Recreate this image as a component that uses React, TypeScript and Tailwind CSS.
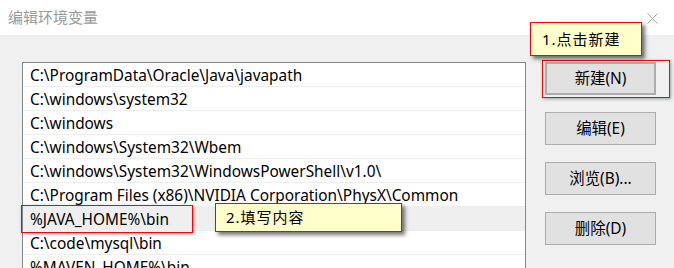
import React from 'react';

const paths = [
  'C:\\ProgramData\\Oracle\\Java\\javapath',
  'C:\\windows\\system32',
  'C:\\windows',
  'C:\\windows\\System32\\Wbem',
  'C:\\windows\\System32\\WindowsPowerShell\\v1.0\\',
  'C:\\Program Files (x86)\\NVIDIA Corporation\\PhysX\\Common',
  '%JAVA_HOME%\\bin',
  'C:\\code\\mysql\\bin',
  '%MAVEN_HOME%\\bin',
];

const buttons = ['新建(N)', '编辑(E)', '浏览(B)...', '删除(D)'];

const font = { fontFamily: '"Noto Sans", "Noto Sans CJK SC", sans-serif' };

const App: React.FC = () => {
  return (
    <div className="relative w-[674px] h-[268px] overflow-hidden bg-[#f0f0f0] text-black" style={font}>
      {/* title bar */}
      <div className="h-[35px] bg-white flex items-center justify-between pl-[8px] pr-[16px]">
        <span className="text-[15px] text-[#9a9a9a]">编辑环境变量</span>
        <svg width="11" height="11" viewBox="0 0 11 11" className="mt-[1px]">
          <path d="M0.5 0.5 L10.5 10.5 M10.5 0.5 L0.5 10.5" stroke="#a0a0a0" strokeWidth="1" />
        </svg>
      </div>

      <div className="flex pl-[22px] pt-[27px] gap-[19px]">
        {/* path list */}
        <div className="w-[504px] h-[240px] bg-white border border-[#828790] border-b-0 overflow-hidden">
          {paths.map((p, i) => (
            <div
              key={p}
              className={`h-[24px] pl-[7px] flex items-center pt-[2px] text-[15.4px] leading-none whitespace-nowrap border-b border-[#eeeeee] ${
                i === 6 ? 'bg-[#efefef]' : ''
              }`}
            >
              {p}
            </div>
          ))}
        </div>

        {/* buttons */}
        <div className="flex flex-col gap-[17px]">
          {buttons.map((b, i) => (
            <button
              key={b}
              className={`w-[111px] h-[33px] bg-[#e1e1e1] text-[15.4px] flex items-center justify-center ${
                i === 0 ? 'border-2 border-[#adadad]' : 'border border-[#adadad]'
              }`}
            >
              {b}
            </button>
          ))}
        </div>
      </div>

      {/* annotations */}
      <div className="absolute left-[542px] top-[60px] w-[128px] h-[38px] border border-[#ff0000] shadow-[1px_1px_3px_rgba(0,0,0,0.35)]" />
      <div className="absolute left-[530px] top-[22px] w-[112px] h-[34px] bg-[#ffffcc] border border-[#ff0000] shadow-[3px_3px_4px_rgba(0,0,0,0.55)] flex items-center pl-[11px] text-[15px] tracking-[1px]">
        1.点击新建
      </div>

      <div className="absolute left-[21px] top-[205px] w-[172px] h-[28px] border border-[#ff0000] shadow-[1px_1px_3px_rgba(0,0,0,0.35)]" />
      <div className="absolute left-[215px] top-[203px] w-[187px] h-[29px] bg-[#ffffcc] border border-[#ff0000] shadow-[3px_3px_4px_rgba(0,0,0,0.55)] flex items-center pl-[10px] text-[15px] tracking-[1px]">
        2.填写内容
      </div>
    </div>
  );
};

export default App;
